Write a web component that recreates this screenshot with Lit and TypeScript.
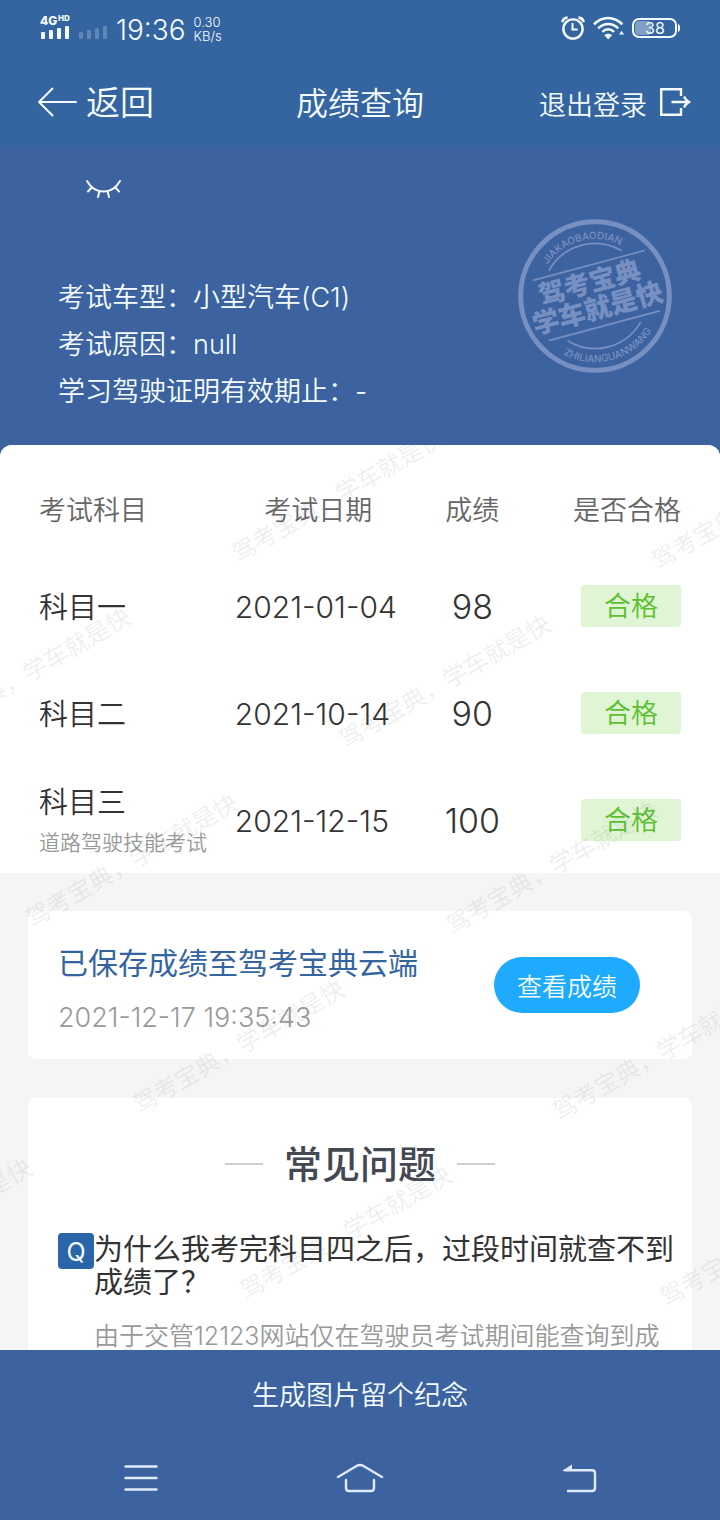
import { LitElement, html, css, svg } from "lit";
import { customElement, state } from "lit/decorators.js";

interface Result {
  subject: string;
  note?: string;
  date: string;
  score: number;
  status: string;
}

const FONT = css`Inter, "Noto Sans CJK SC", sans-serif`;

@customElement("status-bar")
class StatusBar extends LitElement {
  static styles = css`
    :host {
      display: flex;
      align-items: center;
      justify-content: space-between;
      height: 56px;
      padding: 0 40px;
      color: #f4fbff;
      font-family: ${FONT};
      font-weight: 350;
    }
    .group { display: flex; align-items: center; gap: 8px; }
    .clock { font-size: 28px; line-height: 32px; padding-top: 3px; }
    .speed { font-size: 13px; line-height: 14px; padding-top: 2px; }
    svg { display: block; }
    .net { font: 800 12px Inter, sans-serif; }
    .hd { font: 800 8px Inter, sans-serif; }
    .level { font: 400 16px Inter, sans-serif; }
  `;
  render() {
    return html`
      <div class="group">
        <svg width="68" height="30" viewBox="0 0 68 30" fill="currentColor" aria-label="信号">
          <text class="net" x="0" y="12">4G</text>
          <text class="hd" x="18" y="8">HD</text>
          <rect x="1" y="19" width="4" height="7" rx="1" /><rect x="9" y="17" width="4" height="9" rx="1" />
          <rect x="17" y="15" width="4" height="11" rx="1" /><rect x="25" y="13" width="4" height="13" rx="1" />
          <g opacity=".22">
            <rect x="39" y="19" width="4" height="7" rx="1" /><rect x="47" y="17" width="4" height="9" rx="1" />
            <rect x="55" y="15" width="4" height="11" rx="1" /><rect x="63" y="13" width="4" height="13" rx="1" />
          </g>
        </svg>
        <span class="clock">19:36</span>
        <span class="speed">0.30<br />KB/s</span>
      </div>
      <div class="group">
        <svg width="24" height="24" viewBox="0 0 24 24" fill="none" stroke="currentColor" stroke-width="2.4">
          <circle cx="12" cy="13" r="9.6" />
          <path d="M11.5 7v6.6h5.2" stroke-width="2" />
          <path d="M1.4 6.2C1.8 3.6 3.8 1.8 6.6 1.6M22.6 6.2C22.2 3.6 20.2 1.8 17.4 1.6" stroke-width="2.6" />
        </svg>
        <svg width="31" height="24" viewBox="0 0 31 24" fill="none" stroke="currentColor" stroke-width="2.5">
          <path d="M1 8.4C9-.2 21-.2 29.4 8.4M5.2 12.4c5.6-6 14.4-6 20 0M9.4 16c3.2-3.6 8.4-3.6 11.6 0" />
          <path d="M15.2 23.4l-3.8-4.2c1.8-2 5.8-2 7.6 0z" fill="currentColor" stroke="none" />
          <path d="M28.6 14.8l2.4 3.6h-4.8z" fill="currentColor" stroke="none" />
        </svg>
        <svg width="48" height="20" viewBox="0 0 48 20">
          <rect x="3" y="3" width="16" height="14" rx="4" fill="#fff" opacity=".38" />
          <rect x="1" y="1" width="43" height="18" rx="6" fill="none" stroke="currentColor" stroke-width="2" />
          <path d="M46 6q2 .6 2 4t-2 4z" fill="currentColor" />
          <text class="level" x="23" y="16" text-anchor="middle" fill="currentColor">38</text>
        </svg>
      </div>
    `;
  }
}

@customElement("brand-seal")
class BrandSeal extends LitElement {
  static styles = css`
    :host { display: block; color: #7790c1; }
    svg { display: block; width: 154px; height: 154px; }
    .name { font: 900 78px "Noto Sans CJK SC", sans-serif; }
    .slogan { font: 900 80px "Noto Sans CJK SC", sans-serif; }
    .ring { font: 500 30px Inter, sans-serif; }
  `;
  render() {
    return html`
      <svg viewBox="-230 -230 460 460" aria-label="驾考宝典">
        <defs>
          <path id="upper" d="M-170 0A170 170 0 0 1 170 0" />
          <path id="lower" d="M-198 0A198 198 0 0 0 198 0" />
        </defs>
        <circle r="222" fill="none" stroke="currentColor" stroke-width="15" />
        <g transform="rotate(-15)" fill="currentColor">
          <g fill="none" stroke="currentColor" stroke-width="5">
            <path d="M-167-93H178M-168 93H175" />
            <path d="M-114-108A157 157 0 0 1 112-110M-114 108A157 157 0 0 0 112 110" />
          </g>
          <text class="name" x="-5" y="-15" text-anchor="middle">驾考宝典</text>
          <text class="slogan" x="-2" y="66" text-anchor="middle">学车就是快</text>
          <text class="ring" text-anchor="middle"><textPath href="#upper" startOffset="50%">JIAKAOBAODIAN</textPath></text>
          <text class="ring" text-anchor="middle"><textPath href="#lower" startOffset="50%">ZHILIANGUANWANG</textPath></text>
        </g>
      </svg>
    `;
  }
}

@customElement("water-mark")
class WaterMark extends LitElement {
  static styles = css`
    :host { display: block; overflow: hidden; pointer-events: none; }
    svg { display: block; width: 100%; height: 100%; }
    text { font: 400 24px "Noto Sans CJK SC", sans-serif; fill: #6b7a8c; fill-opacity: 0.12; }
  `;

  @state() private w = 0;
  @state() private h = 0;

  private observer = new ResizeObserver(() => {
    this.w = this.clientWidth;
    this.h = this.clientHeight;
  });

  connectedCallback() {
    super.connectedCallback();
    this.observer.observe(this);
  }

  disconnectedCallback() {
    super.disconnectedCallback();
    this.observer.disconnect();
  }

  render() {
    const marks = [];
    for (let row = 0; row * 186 < this.h; row++) {
      for (let col = -4; col * 420 < this.w; col++) {
        const x = 238 + row * 107 + col * 420;
        const y = 118 + row * 186 + col * 7;
        if (x < -200 || x > this.w - 20) continue;
        marks.push(svg`<text transform="translate(${x} ${y}) rotate(-30)">驾考宝典，学车就是快</text>`);
      }
    }
    return html`<svg aria-hidden="true">${marks}</svg>`;
  }
}

@customElement("app-root")
class AppRoot extends LitElement {
  static styles = css`
    :host {
      display: flex;
      flex-direction: column;
      height: 100vh;
      background: #f5f5f5;
      color: #333;
      font-family: ${FONT};
      font-size: 27px;
      font-weight: 350;
    }
    * { box-sizing: border-box; }
    button {
      border: 0;
      padding: 0;
      background: none;
      color: inherit;
      font: inherit;
      cursor: pointer;
    }
    svg { display: block; }
    h1, h2, h3, p, dl, dd { margin: 0; font-weight: inherit; }

    .top { background: #3565a0; color: #f4fbff; }
    .bar {
      display: grid;
      grid-template-columns: 1fr auto 1fr;
      align-items: center;
      height: 91px;
      padding: 0 29px;
    }
    .bar h1 { padding-top: 4px; font-size: 32px; line-height: 44px; }
    .back { display: flex; align-items: center; gap: 9px; padding-left: 8px; font-size: 34px; line-height: 44px; }
    .logout { display: flex; align-items: center; gap: 12px; justify-self: end; }
    .label { padding-top: 3px; }

    main { flex: 1; min-height: 0; overflow-y: auto; scrollbar-width: none; background: #3c63a0; }
    .hero { padding: 30px 48px 30px 58px; color: #f4fbff; }
    .eye { display: block; margin-left: 27px; }
    .summary { display: flex; justify-content: space-between; align-items: flex-start; padding-top: 20px; }
    .facts { padding-top: 55px; line-height: 47px; }
    .facts div { display: flex; }

    .sheet { position: relative; background: #f5f5f5; border-radius: 12px 12px 0 0; overflow: hidden; }
    .mark { position: absolute; inset: 0; }
    .results { padding: 20px 39px 0; background: #fff; }
    table { width: 100%; border-collapse: collapse; table-layout: fixed; }
    th, td { padding: 0; font-weight: inherit; text-align: left; white-space: nowrap; }
    th { height: 87px; color: #666; }
    td { height: 107px; }
    .c-name { width: 30.5%; }
    .c-date { width: 26%; }
    .c-score { width: 22%; }
    th.mid, td.score { text-align: center; }
    th.end { text-align: right; }
    td.name { padding-top: 4px; }
    td.date, td.score { padding-top: 2px; }
    .subject { font-size: 29px; line-height: 42px; }
    .date { font-size: 30px; }
    .note { font-size: 21px; line-height: 38px; color: #999; }
    .score { font-size: 34px; }
    .pass {
      width: 100px;
      height: 42px;
      margin-left: auto;
      border-radius: 4px;
      background: #dff5d3;
      color: #5bc02f;
      line-height: 44px;
      text-align: center;
    }

    .cards { display: flex; flex-direction: column; gap: 39px; padding: 38px 28px 0; }
    .card { background: #fff; border-radius: 8px; }
    .saved { display: flex; align-items: center; justify-content: space-between; height: 148px; padding: 0 52px 0 30px; }
    .saved div { padding-top: 12px; }
    .saved h2 { font-size: 30px; font-weight: 400; line-height: 54px; color: #3565a0; }
    .saved p { line-height: 56px; color: #999; }
    .view { width: 146px; height: 56px; border-radius: 28px; background: #1eabfe; color: #f4fbff; font-size: 25px; }

    .faq { padding: 38px 16px 40px 30px; }
    .faq h2 {
      display: flex;
      align-items: center;
      justify-content: center;
      gap: 21px;
      padding-right: 14px;
      color: #444852;
      font-size: 38px;
      font-weight: 500;
      line-height: 56px;
    }
    .faq h2::before, .faq h2::after { content: ""; width: 38px; height: 2px; background: #cfcfd4; }
    .item { display: grid; grid-template-columns: 36px 1fr; padding-top: 41px; }
    .q {
      width: 36px;
      height: 36px;
      border-radius: 4px;
      background: #2b65a9;
      color: #f4fbff;
      font-size: 25px;
      font-weight: 400;
      line-height: 38px;
      text-align: center;
    }
    .item h3 { font-size: 29px; font-weight: 400; line-height: 33px; }
    .answer { grid-column: 2; padding-top: 20px; font-size: 25px; line-height: 34px; color: #999; }

    .foot { background: #3c63a0; color: #f4fbff; }
    .share { display: block; width: 100%; height: 86px; }
    .nav { display: grid; grid-template-columns: repeat(3, 1fr); height: 84px; padding: 0 31px; }
    .nav button { display: grid; place-items: center; color: #dfeaff; }
  `;

  @state() private results: Result[] = [
    { subject: "科目一", date: "2021-01-04", score: 98, status: "合格" },
    { subject: "科目二", date: "2021-10-14", score: 90, status: "合格" },
    { subject: "科目三", note: "道路驾驶技能考试", date: "2021-12-15", score: 100, status: "合格" },
  ];

  render() {
    return html`
      <div class="top">
        <status-bar></status-bar>
        <header class="bar">
          <button class="back">
            <svg width="40" height="30" viewBox="0 0 40 30" fill="none" stroke="currentColor" stroke-width="2" stroke-linecap="round" stroke-linejoin="round">
              <path d="M39 15H2M15.500 1.500L2 15l13.500 13.500" />
            </svg>
            <span class="label">返回</span>
          </button>
          <h1>成绩查询</h1>
          <button class="logout">
            <span class="label">退出登录</span>
            <svg width="32" height="30" viewBox="0 0 32 30" fill="none" stroke="currentColor" stroke-width="2.400">
              <path d="M22 9V2.200H2.200v25.600H22V21" />
              <path d="M12.500 15H30M25 9.500q1.500 3.500 5 5.500-3.500 2-5 5.500" />
            </svg>
          </button>
        </header>
      </div>

      <main>
        <section class="hero">
          <button class="eye" aria-label="显示信息">
            <svg width="37" height="22" viewBox="0 0 37 22" fill="none" stroke="currentColor" stroke-width="2" stroke-linecap="round">
              <path d="M2 4c8 14 25 14 33 0M7 10l-4 4.500M14.500 14l-1.500 6M22.500 14l1.500 6M30 10l4 4.500" />
            </svg>
          </button>
          <div class="summary">
            <dl class="facts">
              <div><dt>考试车型：</dt><dd>小型汽车(C1)</dd></div>
              <div><dt>考试原因：</dt><dd>null</dd></div>
              <div><dt>学习驾驶证明有效期止：</dt><dd>-</dd></div>
            </dl>
            <brand-seal></brand-seal>
          </div>
        </section>

        <div class="sheet">
          <section class="results">
            <table>
              <thead>
                <tr>
                  <th class="c-name">考试科目</th>
                  <th class="c-date mid">考试日期</th>
                  <th class="c-score mid">成绩</th>
                  <th class="end">是否合格</th>
                </tr>
              </thead>
              <tbody>
                ${this.results.map(
                  (r) => html`
                    <tr>
                      <td class="name">
                        <div class="subject">${r.subject}</div>
                        ${r.note ? html`<div class="note">${r.note}</div>` : null}
                      </td>
                      <td class="date">${r.date}</td>
                      <td class="score">${r.score}</td>
                      <td><div class="pass">${r.status}</div></td>
                    </tr>
                  `
                )}
              </tbody>
            </table>
          </section>

          <div class="cards">
            <section class="card saved">
              <div>
                <h2>已保存成绩至驾考宝典云端</h2>
                <p>2021-12-17 19:35:43</p>
              </div>
              <button class="view">查看成绩</button>
            </section>
            <section class="card faq">
              <h2>常见问题</h2>
              <div class="item">
                <span class="q">Q</span>
                <h3>为什么我考完科目四之后，过段时间就查不到成绩了？</h3>
                <p class="answer">由于交管12123网站仅在驾驶员考试期间能查询到成</p>
              </div>
            </section>
          </div>
          <water-mark class="mark"></water-mark>
        </div>
      </main>

      <footer class="foot">
        <button class="share">生成图片留个纪念</button>
        <nav class="nav">
          <button aria-label="菜单">
            <svg width="34" height="28" viewBox="0 0 34 28" stroke="currentColor" stroke-width="2.400" stroke-linecap="round">
              <path d="M1.500 2.500h31M1.500 14h31M1.500 25.500h31" />
            </svg>
          </button>
          <button aria-label="主页">
            <svg width="48" height="30" viewBox="0 0 48 30" fill="none" stroke="currentColor" stroke-width="2.400" stroke-linecap="round" stroke-linejoin="round">
              <path d="M2 14L21 2.800q3-1.600 6 0L46 14M10 17v8q0 3 3 3h22q3 0 3-3v-8" />
            </svg>
          </button>
          <button aria-label="返回">
            <svg width="36" height="30" viewBox="0 0 36 30" fill="none" stroke="currentColor" stroke-width="2.400" stroke-linecap="round">
              <path d="M4 7.200h27q3 0 3 3V25q0 3-3 3H7" />
              <path d="M1 8l10-6.500V8z" fill="currentColor" stroke="none" />
            </svg>
          </button>
        </nav>
      </footer>
    `;
  }
}
